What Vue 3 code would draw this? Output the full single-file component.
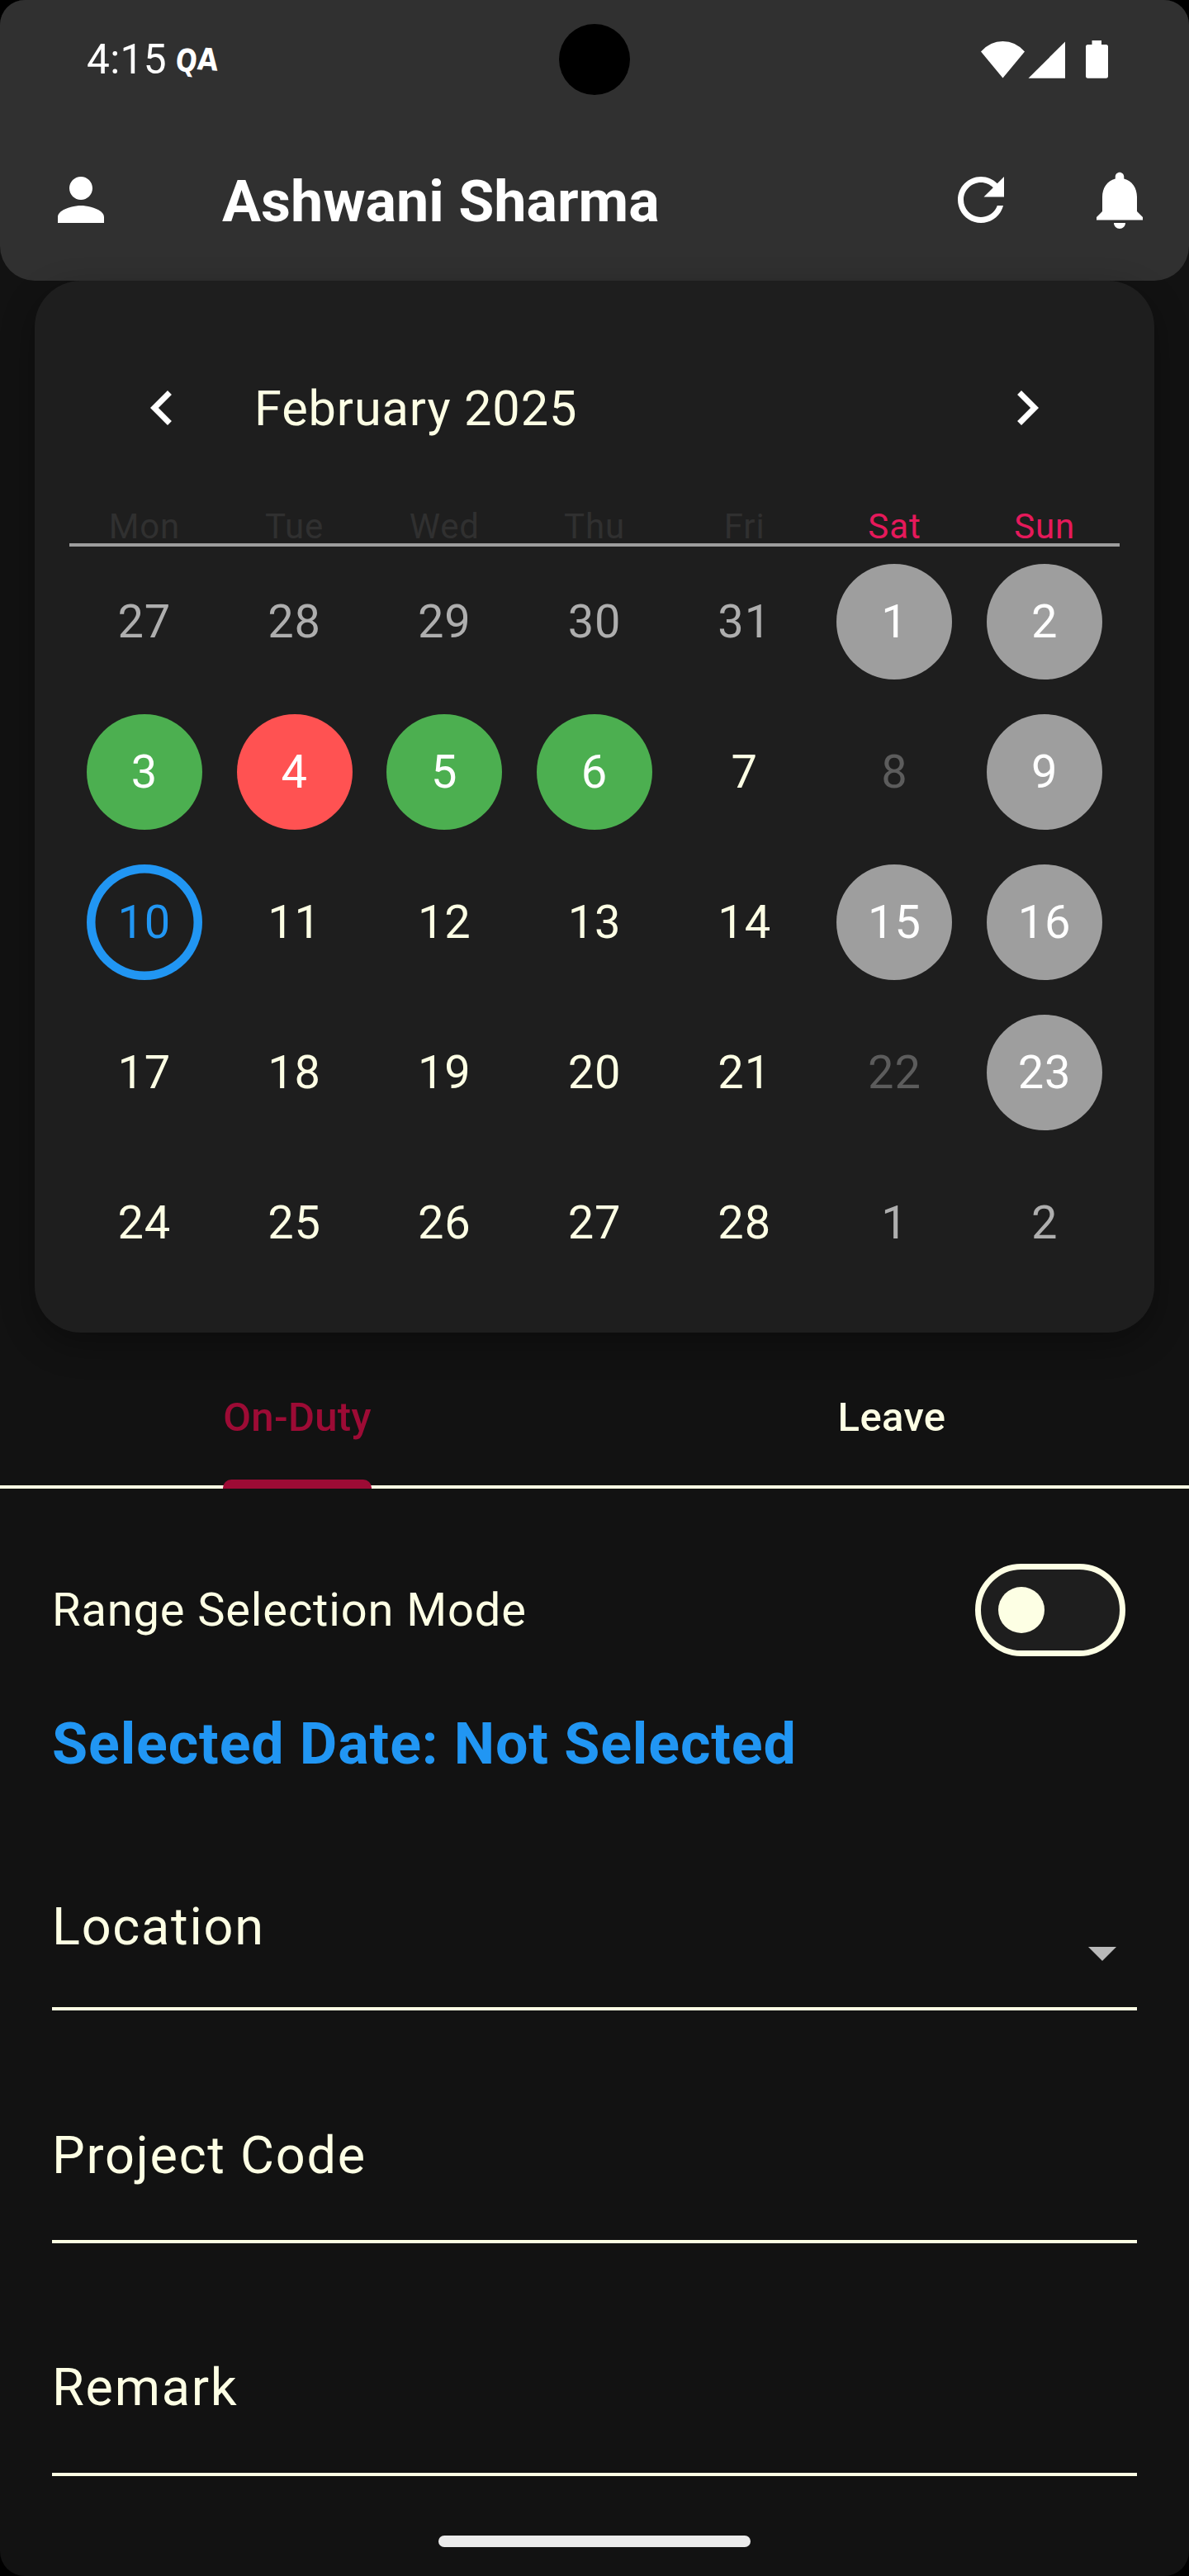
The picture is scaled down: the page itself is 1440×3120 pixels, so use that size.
<script setup>
const weekdays = ['Mon', 'Tue', 'Wed', 'Thu', 'Fri', 'Sat', 'Sun']

const days = [
  ['27', 'outside'], ['28', 'outside'], ['29', 'outside'], ['30', 'outside'], ['31', 'outside'], ['1', 'holiday'], ['2', 'holiday'],
  ['3', 'present'], ['4', 'absent'], ['5', 'present'], ['6', 'present'], ['7', ''], ['8', 'disabled'], ['9', 'holiday'],
  ['10', 'today'], ['11', ''], ['12', ''], ['13', ''], ['14', ''], ['15', 'holiday'], ['16', 'holiday'],
  ['17', ''], ['18', ''], ['19', ''], ['20', ''], ['21', ''], ['22', 'disabled'], ['23', 'holiday'],
  ['24', ''], ['25', ''], ['26', ''], ['27', ''], ['28', ''], ['1', 'outside'], ['2', 'outside'],
]
</script>

<template>
  <div class="device">
    <div class="screen">
      <header class="app-header">
        <div class="status-bar">
          <span class="clock">4:15</span>
          <span class="badge"><i class="q">Q</i><i class="a">A</i></span>
          <span class="camera"></span>
          <svg class="status-icons" viewBox="0 0 160 50" fill="#fff">
            <path d="M1 15.500Q12 3 27.500 3T54 15.500L27.500 47.400Z" />
            <path d="M58.500 47.700L103 3.500V47.700Z" />
            <path d="M135.500 2h11.500v5h5.500q2.500 0 2.500 2.500v35.500q0 2.700-2.500 2.700h-22q-2.500 0-2.500-2.700V9.500q0-2.500 2.500-2.500h5z" />
          </svg>
        </div>
        <div class="toolbar">
          <svg class="icon" viewBox="0 0 24 24"><path d="M12 12c2.210 0 4-1.790 4-4s-1.790-4-4-4-4 1.790-4 4 1.790 4 4 4zm0 2c-2.670 0-8 1.340-8 4v2h16v-2c0-2.660-5.330-4-8-4z" /></svg>
          <h1 class="title">Ashwani Sharma</h1>
          <svg class="icon" viewBox="0 0 24 24"><path d="M17.650 6.350C16.200 4.900 14.210 4 12 4c-4.420 0-7.990 3.580-7.990 8s3.570 8 7.990 8c3.730 0 6.840-2.550 7.730-6h-2.080c-.82 2.330-3.040 4-5.650 4-3.310 0-6-2.690-6-6s2.690-6 6-6c1.660 0 3.140.69 4.220 1.780L13 11h7V4l-2.350 2.350z" /></svg>
          <svg class="icon bell" viewBox="0 0 24 24"><path d="M12 22c1.100 0 2-.9 2-2h-4c0 1.100.89 2 2 2zm6-6v-5c0-3.070-1.640-5.640-4.500-6.320V4c0-.83-.67-1.500-1.500-1.500s-1.500.67-1.500 1.500v.68C7.630 5.360 6 7.920 6 11v5l-2 2v1h16v-1l-2-2z" /></svg>
        </div>
      </header>

      <section class="calendar">
        <div class="month-bar">
          <svg class="icon" viewBox="0 0 24 24"><path d="M15.410 7.410L14 6l-6 6 6 6 1.410-1.410L10.830 12z" /></svg>
          <span class="month">February 2025</span>
          <svg class="icon" viewBox="0 0 24 24"><path d="M10 6L8.590 7.410 13.170 12l-4.580 4.590L10 18l6-6z" /></svg>
        </div>
        <div class="weekdays">
          <span v-for="(d, i) in weekdays" :key="d" :class="{ weekend: i > 4 }">{{ d }}</span>
        </div>
        <div class="grid">
          <div v-for="([n, kind], i) in days" :key="i" class="cell">
            <span class="day" :class="kind">{{ n }}</span>
          </div>
        </div>
      </section>

      <nav class="tabs">
        <div class="tab"><span class="tab-label active">On-Duty</span></div>
        <div class="tab"><span class="tab-label">Leave</span></div>
      </nav>

      <main class="form">
        <div class="range-row">
          <span class="range-label">Range Selection Mode</span>
          <span class="switch"><span class="thumb"></span></span>
        </div>
        <p class="selected">Selected Date: Not Selected</p>
        <div class="field location">
          <span>Location</span>
          <svg class="caret" viewBox="0 0 34 17"><path d="M0 0h34L17 17z" fill="#b9b9b9" /></svg>
        </div>
        <div class="field project"><span>Project Code</span></div>
        <div class="field remark"><span>Remark</span></div>
      </main>

      <div class="home-indicator"></div>
    </div>
  </div>
</template>

<style>
body {
  margin: 0;
  background: #000;
}
</style>

<style scoped>
.device {
  width: 1440px;
  height: 3120px;
  background: #000;
  font-family: Roboto, "Liberation Sans", sans-serif;
}
.screen {
  display: flex;
  flex-direction: column;
  height: 3120px;
  border-radius: 30px;
  overflow: hidden;
  background: #121212;
  color: #fdffe4;
}
.app-header {
  height: 340px;
  flex: none;
  border-radius: 0 0 42px 42px;
  background: #303030;
  color: #fff;
}
.status-bar {
  position: relative;
  display: flex;
  align-items: center;
  height: 144px;
  box-sizing: border-box;
  padding: 0 93px 0 105px;
}
.clock {
  width: 98px;
  font-size: 49.500px;
  line-height: 58px;
  letter-spacing: 0.400px;
}
.badge {
  display: flex;
  height: 44px;
  margin-left: 10px;
  font-family: "DejaVu Sans", sans-serif;
  font-weight: 700;
  line-height: 44px;
}
.badge i {
  display: block;
  font-style: normal;
}
.q {
  width: 26px;
  font-size: 38px;
  transform: rotate(8deg) scaleX(0.8);
  transform-origin: 0 50%;
}
.a {
  font-size: 37px;
  transform: rotate(4deg) scaleX(0.88);
  transform-origin: 0 50%;
}
.camera {
  position: absolute;
  left: 677px;
  top: 29px;
  width: 86px;
  height: 86px;
  border-radius: 50%;
  background: #000;
}
.status-icons {
  width: 160px;
  height: 50px;
  margin-left: auto;
}
.toolbar {
  display: flex;
  align-items: center;
  height: 196px;
  padding: 0 42px 0 56px;
}
.icon {
  width: 84px;
  height: 84px;
  flex: none;
  fill: #fff;
}
.bell {
  margin-left: 84px;
}
.title {
  flex: 1;
  margin: 3px 0 0 129px;
  font-size: 70px;
  line-height: 82px;
  font-weight: 700;
}
.calendar {
  flex: none;
  height: 1274px;
  margin: 0 42px;
  padding: 0 42px;
  box-sizing: border-box;
  border-radius: 56px;
  background: #1e1e1e;
  box-shadow: 0 14px 42px rgba(0, 0, 0, 0.32);
}
.month-bar {
  display: flex;
  align-items: center;
  height: 266px;
  box-sizing: border-box;
  padding: 42px 70px 0;
}
.month {
  flex: 1;
  margin: 2px 0 0 70px;
  font-size: 59.500px;
  letter-spacing: 0.875px;
}
.weekdays {
  display: grid;
  grid-template-columns: repeat(7, 1fr);
  height: 56px;
  box-sizing: border-box;
  padding-top: 7px;
  border-bottom: 4px solid #9e9e9e;
  font-size: 42px;
  line-height: 49px;
  letter-spacing: 0.875px;
  text-align: center;
  color: #303030;
}
.weekend {
  color: #e6195b;
}
.grid {
  display: grid;
  grid-template-columns: repeat(7, 1fr);
  grid-auto-rows: 182px;
}
.cell {
  display: flex;
  align-items: center;
  justify-content: center;
}
.day {
  width: 140px;
  height: 140px;
  box-sizing: border-box;
  border-radius: 50%;
  font-size: 56px;
  line-height: 140px;
  letter-spacing: 0.875px;
  text-align: center;
}
.outside {
  color: #aeaeae;
}
.disabled {
  color: #5c5c5c;
}
.holiday {
  background: #9e9e9e;
  color: #fff;
}
.present {
  background: #4caf50;
  color: #fff;
}
.absent {
  background: #ff5252;
  color: #fff;
}
.today {
  box-shadow: inset 0 0 0 10.500px #2196f3;
  color: #2196f3;
}
.tabs {
  display: flex;
  flex: none;
  height: 189px;
  box-sizing: border-box;
  padding-top: 15px;
  background: linear-gradient(#fdffe4, #fdffe4) bottom / 100% 4px no-repeat;
}
.tab {
  flex: 1;
  display: flex;
  justify-content: center;
}
.tab-label {
  position: relative;
  height: 174px;
  font-size: 49px;
  line-height: 176px;
  font-weight: 500;
  letter-spacing: 0.350px;
}
.active {
  color: #9d0b35;
}
.active::after {
  content: "";
  position: absolute;
  left: 0;
  right: 0;
  bottom: 0;
  height: 11px;
  border-radius: 10px 10px 0 0;
  background: #9d0b35;
}
.form {
  padding: 0 63px;
}
.range-row {
  display: flex;
  align-items: center;
  justify-content: space-between;
  height: 112px;
  margin-top: 91px;
  padding-right: 14px;
}
.range-label {
  font-size: 56px;
  letter-spacing: 0.875px;
}
.switch {
  width: 182px;
  height: 112px;
  box-sizing: border-box;
  border: 7px solid #fdffe4;
  border-radius: 56px;
  background: #1e1e1e;
  padding: 21px;
}
.thumb {
  display: block;
  width: 56px;
  height: 56px;
  border-radius: 50%;
  background: #fdffe4;
}
.selected {
  margin: 64px 0 0;
  font-size: 70px;
  line-height: 84px;
  font-weight: 700;
  letter-spacing: 0.875px;
  color: #2196f3;
}
.field {
  display: flex;
  justify-content: space-between;
  box-sizing: border-box;
  height: 282px;
  border-bottom: 4px solid #fdffe4;
  font-size: 63px;
  line-height: 74px;
  letter-spacing: 1.750px;
}
.location {
  height: 281px;
  padding-top: 143px;
}
.project {
  padding-top: 139px;
}
.remark {
  padding-top: 138px;
}
.caret {
  width: 34px;
  height: 17px;
  margin: 61px 25px 0 0;
}
.home-indicator {
  flex: none;
  width: 378px;
  height: 14px;
  margin: auto auto 35px;
  border-radius: 7px;
  background: #ebebeb;
}
</style>
